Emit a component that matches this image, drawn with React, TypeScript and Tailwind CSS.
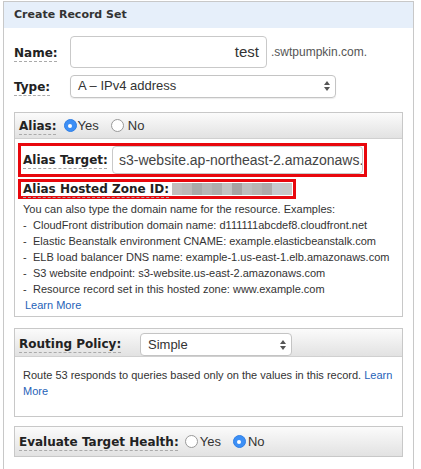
import React from 'react';

const label =
  "shrink-0 whitespace-nowrap font-['DejaVu_Sans',Verdana,sans-serif] font-bold text-[12px] text-[#222] underline decoration-dashed decoration-[#aaa] underline-offset-[4px]";

function Radio({ on }: { on?: boolean }) {
  if (on) {
    return (
      <span className="flex h-[13px] w-[13px] items-center justify-center rounded-full border border-[#2f7fe6] bg-[#3d8ff5]">
        <span className="h-[4px] w-[4px] rounded-full bg-white" />
      </span>
    );
  }
  return <span className="h-[13px] w-[13px] rounded-full border border-[#999] bg-white" />;
}

function Arrows() {
  return (
    <svg width="6" height="10" viewBox="0 0 6 10" className="text-[#555]">
      <polygon points="0,4 3,0 6,4" fill="currentColor" />
      <polygon points="0,6 3,10 6,6" fill="currentColor" />
    </svg>
  );
}

const blur = [
  '#c2bebe', '#bcb8b8', '#a9a9a9', '#b6b6b6', '#adadad', '#c2c2c2',
  '#a6a3a3', '#bdbdbd', '#b7b5b3', '#aeaaaa', '#c6c9cd', '#c8c8c8',
];

const examples = [
  'CloudFront distribution domain name: d111111abcdef8.cloudfront.net',
  'Elastic Beanstalk environment CNAME: example.elasticbeanstalk.com',
  'ELB load balancer DNS name: example-1.us-east-1.elb.amazonaws.com',
  'S3 website endpoint: s3-website.us-east-2.amazonaws.com',
  'Resource record set in this hosted zone: www.example.com',
];

export default function App() {
  return (
    <div className="h-[469px] w-[421px] overflow-hidden bg-white font-['Liberation_Sans',Arial,sans-serif] text-[#333]">
      <div className="ml-[3px] mt-[1px] h-[470px] w-[411px] border border-[#c8c8c8]">
        <div className="flex h-[26px] items-center bg-[#e6effa] px-[10px] font-['DejaVu_Sans',Verdana,sans-serif] text-[11px] font-bold text-[#333]">
          Create Record Set
        </div>

        <div className="mt-[8px] flex items-center pl-[10px]">
          <span className="w-[56px]">
            <span className={label}>Name:</span>
          </span>
          <div className="flex h-[32px] w-[197px] items-center justify-end rounded-[4px] border border-[#c9c9c9] pr-[7px] text-[15px] text-[#333]">
            test
          </div>
          <span className="ml-[4px] text-[12px] text-[#555]">.swtpumpkin.com.</span>
        </div>

        <div className="mt-[6px] flex items-center pl-[10px]">
          <span className="w-[56px]">
            <span className={label}>Type:</span>
          </span>
          <div className="flex h-[23px] w-[266px] items-center justify-between rounded-[4px] border border-[#c4c4c4] pl-[7px] pr-[5px] text-[13px] text-[#333] shadow-[0_1px_1px_rgba(0,0,0,0.08)]">
            <span>A – IPv4 address</span>
            <Arrows />
          </div>
        </div>

        {/* alias panel */}
        <div className="ml-[10px] mt-[14px] w-[389px] border border-[#c8c8c8] pb-[3px]">
          <div className="flex h-[26px] items-center gap-[7px] border-b border-[#d0d0d0] bg-linear-to-b from-[#fbfbfb] to-[#e2e2e2] pl-[4px] text-[13px]">
            <span className={label}>Alias:</span>
            <span className="flex items-center gap-[1px]">
              <Radio on />
              <span>Yes</span>
            </span>
            <span className="ml-[5px] flex items-center gap-[4px]">
              <Radio />
              <span>No</span>
            </span>
          </div>

          <div className="ml-[3px] mt-[4px] flex w-[349px] items-center border-[3px] border-[#e8070d] pl-[2px] pr-[1px]">
            <span className={label}>Alias Target:</span>
            <div className="ml-auto h-[28px] w-[251px] overflow-hidden whitespace-nowrap rounded-[4px] border border-[#c9c9c9] pl-[6px] text-[14px] leading-[26px] text-[#444]">
              s3-website.ap-northeast-2.amazonaws.com
            </div>
          </div>

          <div className="ml-[3px] mt-[2px] flex h-[20px] w-[278px] items-center border-[3px] border-[#e8070d] pl-[2px]">
            <span className={label}>Alias Hosted Zone ID:</span>
            <span className="ml-[3px] flex h-[12px] shrink-0">
              {blur.map((c, i) => (
                <span key={i} className="h-full w-[10px]" style={{ backgroundColor: c }} />
              ))}
            </span>
          </div>

          <div className="mt-[2px] pl-[8px] text-[11px] leading-[16px] text-[#333]">
            <div>You can also type the domain name for the resource. Examples:</div>
            {examples.map((e) => (
              <div key={e} className="flex">
                <span className="w-[10px]">-</span>
                <span>{e}</span>
              </div>
            ))}
            <a className="pl-[2px] text-[#1f63b8]" href="#">
              Learn More
            </a>
          </div>
        </div>

        {/* routing policy */}
        <div className="ml-[10px] mt-[11px] w-[389px] border border-[#c8c8c8]">
          <div className="flex h-[28px] items-start border-b border-[#d0d0d0] bg-linear-to-b from-[#fbfbfb] to-[#e2e2e2] pl-[4px] pt-[4px]">
            <span className="flex h-[22px] w-[121px] items-center">
              <span className={label}>Routing Policy:</span>
            </span>
            <div className="flex h-[23px] w-[152px] items-center justify-between rounded-[4px] border border-[#c4c4c4] bg-white pl-[7px] pr-[5px] text-[13px] text-[#333]">
              <span>Simple</span>
              <Arrows />
            </div>
          </div>
          <div className="h-[59px] pl-[8px] pt-[10px] text-[11px] leading-[16px] text-[#333]">
            <div className="whitespace-nowrap">
              Route 53 responds to queries based only on the values in this record.{' '}
              <a className="text-[#1f63b8]" href="#">
                Learn
              </a>
            </div>
            <a className="text-[#1f63b8]" href="#">
              More
            </a>
          </div>
        </div>

        {/* evaluate target health */}
        <div className="ml-[10px] mt-[9px] flex h-[31px] w-[389px] items-center border border-[#c8c8c8] bg-linear-to-b from-[#fbfbfb] to-[#e2e2e2] pl-[4px] text-[13px]">
          <span className={label}>Evaluate Target Health:</span>
          <span className="ml-[6px] flex items-center gap-[2px]">
            <Radio />
            <span>Yes</span>
          </span>
          <span className="ml-[12px] flex items-center gap-[2px]">
            <Radio on />
            <span>No</span>
          </span>
        </div>
      </div>
    </div>
  );
}
